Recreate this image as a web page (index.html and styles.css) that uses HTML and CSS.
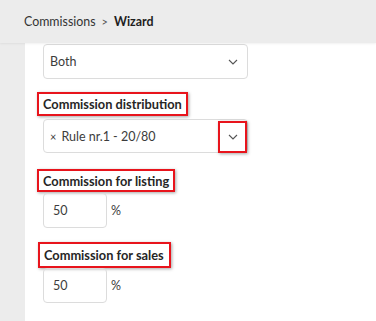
FILE: index.html
```html
<!DOCTYPE html>
<html>
<head>
<meta charset="utf-8">
<link rel="stylesheet" href="styles.css">
</head>
<body>
<header class="topbar">
  <span class="crumb">Commissions</span>
  <span class="sep">&gt;</span>
  <span class="crumb current">Wizard</span>
</header>
<div class="layout">
  <aside class="rail"></aside>
  <main class="content">
    <div class="select">
      <span class="value">Both</span>
      <svg class="chev" width="10" height="6" viewBox="0 0 10 6"><path d="M1 1l4 4 4-4" fill="none" stroke="#555" stroke-width="1.1"/></svg>
    </div>

    <div class="field f1">
      <span class="label hl">Commission distribution</span>
      <div class="select multi">
        <span class="value"><span class="x">×</span>Rule nr.1 - 20/80</span>
        <svg class="chev" width="10" height="6" viewBox="0 0 10 6"><path d="M1 1l4 4 4-4" fill="none" stroke="#555" stroke-width="1.1"/></svg>
        <span class="chev-hl"></span>
      </div>
    </div>

    <div class="field f2">
      <span class="label hl">Commission for listing</span>
      <div class="num-row">
        <div class="num">50</div>
        <span class="unit">%</span>
      </div>
    </div>

    <div class="field f3">
      <span class="label hl">Commission for sales</span>
      <div class="num-row">
        <div class="num">50</div>
        <span class="unit">%</span>
      </div>
    </div>
  </main>
</div>
</body>
</html>
```

FILE: styles.css
```css
* { box-sizing: border-box; }
html, body {
  margin: 0;
  padding: 0;
  width: 376px;
  height: 321px;
  overflow: hidden;
  background: #fff;
  font-family: Lato, "Open Sans", sans-serif;
  color: #333;
}
.topbar {
  height: 43px;
  background: #ececec;
  display: flex;
  align-items: center;
  padding-left: 24px;
  padding-bottom: 1px;
  font-size: 12.4px;
  color: #333;
  box-shadow: 0 1px 2px rgba(0,0,0,0.06);
  position: relative;
  z-index: 1;
}
.sep {
  margin: 0 6px 0 6px;
  font-size: 11px;
  color: #555;
}
.current { font-weight: 700; color: #1e1e1e; }

.layout {
  display: flex;
  height: 278px;
}
.rail {
  width: 25px;
  background: #ececec;
  flex: none;
}
.content {
  flex: 1;
  padding-left: 18px;
  padding-top: 1px;
}
.select {
  width: 205px;
  height: 35px;
  border: 1px solid #dcdcdc;
  border-radius: 4px;
  display: flex;
  align-items: center;
  justify-content: space-between;
  padding: 0 9px 0 6px;
  font-size: 12.5px;
  color: #3c3c3c;
  position: relative;
}
.select .chev { margin-top: 1px; }
.field { display: flex; flex-direction: column; align-items: flex-start; }
.label {
  font-size: 12.8px;
  font-weight: 700;
  color: #262626;
  display: flex;
  align-items: center;
}
.hl {
  border: 2px solid #e8141c;
  box-shadow: 1px 1px 3px rgba(0,0,0,0.35);
  padding: 0 4px 0 4px;
  margin-left: -6px;
}
.f1 { margin-top: 13px; }
.f1 .hl { height: 24px; }
.multi { margin-top: 3px; height: 34px; }
.multi .x { font-size: 11px; margin-right: 5px; }
.chev-hl {
  position: absolute;
  right: 0px;
  top: 1px;
  width: 29px;
  height: 32px;
  border: 2px solid #e8141c;
  box-shadow: 1px 1px 3px rgba(0,0,0,0.35);
}
.f2 { margin-top: 16px; }
.f2 .hl { height: 23px; }
.f2 .num-row { margin-top: 1px; }
.f3 { margin-top: 14px; }
.f3 .hl { height: 26px; margin-left: -5px; padding-right: 5px; }
.num-row { display: flex; align-items: center; }
.num {
  width: 64px;
  height: 35px;
  border: 1px solid #dcdcdc;
  border-radius: 4px;
  display: flex;
  align-items: center;
  padding-left: 9px;
  font-size: 12.5px;
  color: #3c3c3c;
}
.unit { margin-left: 4px; font-size: 12.5px; color: #3c3c3c; }
```
